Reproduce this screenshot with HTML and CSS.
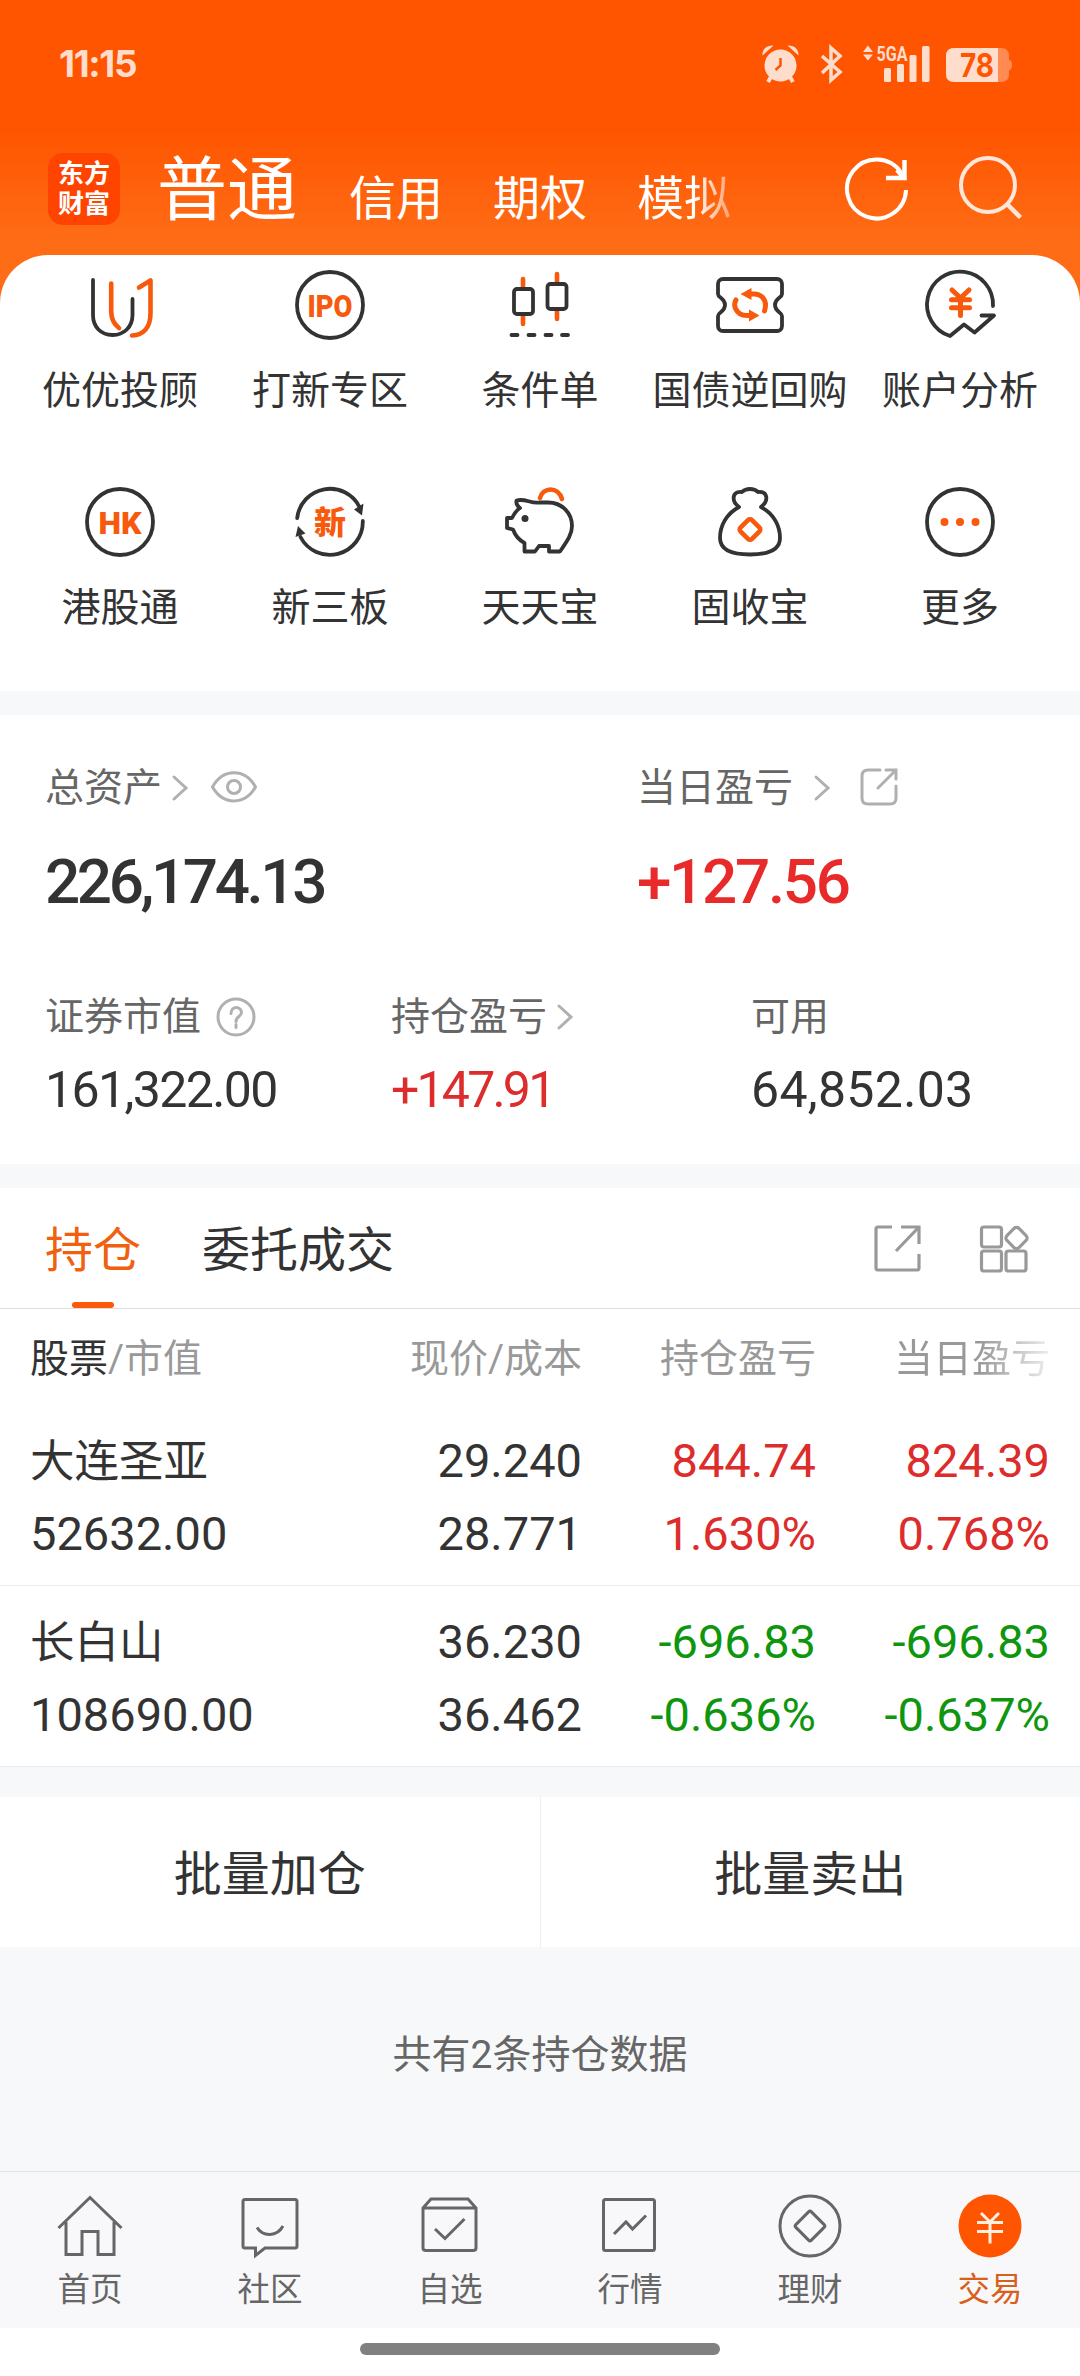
FILE: index.html
```html
<!DOCTYPE html>
<html lang="zh-CN">
<head>
    <meta charset="UTF-8">
    <meta name="viewport" content="width=device-width, initial-scale=1.0">
    <title>交易</title>
    <link rel="stylesheet" href="styles.css">
</head>
<body>
    <header class="header">
        <div class="status-bar">
            <span class="time">11:15</span>
            <svg class="status-icons" width="250" height="44" viewBox="759 42 250 44">
                <g fill="#ffddcc">
                    <circle cx="779.5" cy="65.500" r="16"/>
                    <path d="M761.500 55.500C761 49 766 45 772.500 45.500zM797.500 55.500C798 49 793 45 786.500 45.500z"/>
                    <path d="M770 77L767 82M789 77L792 82" stroke="#ffddcc" stroke-width="4"/>
                    <path d="M866.900 45.500L872 52H862zM866.900 60.500L872 54.500H862z"/>
                    <rect x="883" y="68" width="7" height="14" rx="1.500"/>
                    <rect x="896" y="64" width="7" height="18" rx="1.500"/>
                    <rect x="908.500" y="55" width="7" height="27" rx="1.500"/>
                    <rect x="921" y="46" width="7.500" height="36" rx="1.500"/>
                    <path d="M997 48H1000Q1008 48 1008 56V60Q1011 60 1011 65T1008 70V74Q1008 82 1000 82H997z" opacity=".4"/>
                    <path d="M953 48H997V82H953Q945 82 945 74V56Q945 48 953 48z"/>
                    <text class="net-label" x="875.500" y="61" textLength="31" lengthAdjust="spacingAndGlyphs">5GA</text>
                </g>
                <path d="M779.500 58V65.500L774.500 70" fill="none" stroke="#ff5500" stroke-width="2.500"/>
                <path d="M821 56L839 72L830 80V48L839 56L821 73" fill="none" stroke="#ffddcc" stroke-width="3.500"/>
                <text class="battery-label" x="959" y="76.500" textLength="34" lengthAdjust="spacingAndGlyphs">78</text>
            </svg>
        </div>
        <div class="nav">
            <div class="logo">东方<br>财富</div>
            <div class="nav-tabs">
                <span class="nav-tab active">普通</span>
                <span class="nav-tab">信用</span>
                <span class="nav-tab">期权</span>
                <span class="nav-tab fade">模拟</span>
            </div>
            <svg class="nav-icon" width="68" height="72" viewBox="842 152 68 72">
                <path d="M905 189A29.500 29.500 0 1 1 900 171.500" fill="none" stroke="#fff" stroke-width="4"/>
                <path d="M903.500 159V177H885M903 177L896 169" fill="none" stroke="#fff" stroke-width="4.500"/>
            </svg>
            <svg class="nav-icon" width="68" height="72" viewBox="955 152 68 72">
                <circle cx="987" cy="184" r="27" fill="none" stroke="#ffe6da" stroke-width="4"/>
                <path d="M1006 203L1019.500 216.500" stroke="#ffe6da" stroke-width="4.500"/>
            </svg>
        </div>
    </header>

    <div class="sheet">
        <div class="menu">
            <div class="menu-item">
                <svg class="menu-icon" viewBox="-40 -40 80 80">
                    <path class="dark" d="M-27 -25V10C-27 22 -19 30 -7.500 30S12.500 22 12.500 10V-6"/>
                    <path class="orange" d="M-8.800 -21.500V6C-8.800 15 -5 20 -1 23M19 -17.500L30.500 -24.500V8C30.500 22 24 30 12 30.500"/>
                </svg>
                <span>优优投顾</span>
            </div>
            <div class="menu-item">
                <svg class="menu-icon" viewBox="-40 -40 80 80">
                    <circle class="dark" r="33"/>
                    <text class="mark" x="-22.500" y="11.500" textLength="45" lengthAdjust="spacingAndGlyphs">IPO</text>
                </svg>
                <span>打新专区</span>
            </div>
            <div class="menu-item">
                <svg class="menu-icon" viewBox="-40 -40 80 80">
                    <path class="orange" d="M-17 -26V-17M-17 10V19M17 -31V-22M17 5V14"/>
                    <rect class="dark" x="-26" y="-16" width="19" height="25" rx="3"/>
                    <rect class="dark" x="7.500" y="-21" width="19" height="25" rx="3"/>
                    <path class="dark" d="M-28.500 30H-22.500M-11.500 30H-5.500M5.500 30H11.500M22 30H28"/>
                </svg>
                <span>条件单</span>
            </div>
            <div class="menu-item">
                <svg class="menu-icon" viewBox="-40 -40 80 80">
                    <path class="dark" d="M-27 -26H27a5 5 0 0 1 5 5V-11C32 -7 25 -7 25 0S32 7 32 11V21a5 5 0 0 1 -5 5H-27a5 5 0 0 1 -5 -5V11C-32 7 -25 7 -25 0S-32 -7 -32 -11V-21a5 5 0 0 1 5 -5z"/>
                    <path class="orange bold" d="M0 -11H4C12 -11 15.500 -5 15.500 0C15.500 3 15 4.500 14.500 6M-14 -5C-16 -2 -15.500 1 -14.500 3.500C-12.500 8 -9 10.500 -3 10.500H0"/>
                    <path class="orange-fill" d="M-9.500 -11L1.500 -17V-5zM9.500 10.500L-1 4.500V16.500z"/>
                </svg>
                <span>国债逆回购</span>
            </div>
            <div class="menu-item">
                <svg class="menu-icon" viewBox="-40 -40 80 80">
                    <path class="dark" d="M33 1A33 33 0 1 0 -10 31L4 19.500L14.500 27.500L34 10.500H21.500"/>
                    <path class="orange bold" d="M-8 -15L.5 -7L9 -15M-8.500 -5.300H9.500M-8.500 2.700H9.500M.5 -7V10.500"/>
                </svg>
                <span>账户分析</span>
            </div>
            <div class="menu-item">
                <svg class="menu-icon" viewBox="-40 -40 80 80">
                    <circle class="dark" r="33"/>
                    <text class="mark" x="-21.500" y="11.500" textLength="43" lengthAdjust="spacingAndGlyphs">HK</text>
                </svg>
                <span>港股通</span>
            </div>
            <div class="menu-item">
                <svg class="menu-icon" viewBox="-40 -40 80 80">
                    <path class="dark" d="M-32.800 -4A33 33 0 0 1 29.500 -15M32.800 -1A33 33 0 0 1 -29.500 15"/>
                    <path class="dark-fill" d="M24 -12.500L33.500 -18.500L32 -6.500zM-24.500 11.500L-34.500 15L-32 4z"/>
                    <text class="mark" x="-16" y="12" textLength="32" lengthAdjust="spacingAndGlyphs">新</text>
                </svg>
                <span>新三板</span>
            </div>
            <div class="menu-item">
                <svg class="menu-icon" viewBox="-40 -40 80 80">
                    <path class="orange" d="M0 -24C3 -35 18 -36 22 -23"/>
                    <path class="dark" d="M-20 -14C-23 -16 -24 -19 -23.500 -21.500C-14 -24 -10 -18 0 -19.500H8C22 -19.500 32 -9 32 4C32 12 28 18 20 29.500H9V24H-1L-5 29.500H-15.500V21C-21 18 -25 13 -27 7.500L-33 6V-4H-28C-26 -8 -23 -12 -20 -14z"/>
                    <circle class="dark-fill" cx="-15" cy="-3.500" r="3.500"/>
                </svg>
                <span>天天宝</span>
            </div>
            <div class="menu-item">
                <svg class="menu-icon" viewBox="-40 -40 80 80">
                    <path class="dark" d="M-11 -15C-19 -21 -18 -31 -8 -30C-4 -34 4 -34 8 -30C18 -31 19 -21 11 -15C24 -8 30 4 30 16C30 28 18 32.500 0 32.500S-30 28 -30 16C-30 4 -24 -8 -11 -15z"/>
                    <rect class="orange" x="-8" y="-8" width="16" height="16" rx="2.500" transform="translate(0 7.500) rotate(45)"/>
                </svg>
                <span>固收宝</span>
            </div>
            <div class="menu-item">
                <svg class="menu-icon" viewBox="-40 -40 80 80">
                    <circle class="dark" r="33"/>
                    <circle class="orange-fill" cx="-15.500" r="4"/>
                    <circle class="orange-fill" r="4"/>
                    <circle class="orange-fill" cx="15.500" r="4"/>
                </svg>
                <span>更多</span>
            </div>
        </div>
    </div>

    <section class="assets">
        <div class="asset-row main">
            <div class="asset">
                <div class="asset-label">总资产
                    <svg class="chevron" viewBox="0 0 18 28"><path d="M3 3L15 14L3 25"/></svg>
                    <svg class="eye" viewBox="0 0 48 34"><path d="M2.500 17C13 -2 35 -2 45.500 17C35 35.500 13 35.500 2.500 17z"/><circle cx="24" cy="17" r="6.500"/></svg>
                </div>
                <div class="asset-value">226,174.13</div>
            </div>
            <div class="asset">
                <div class="asset-label">当日盈亏
                    <svg class="chevron wide" viewBox="0 0 18 28"><path d="M3 3L15 14L3 25"/></svg>
                    <svg class="share" viewBox="0 0 40 40"><path d="M21 3H9Q3 3 3 9V31Q3 37 9 37H31Q37 37 37 31V19M27 3H37V12M36 4L19 21"/></svg>
                </div>
                <div class="asset-value red">+127.56</div>
            </div>
        </div>
        <div class="asset-row sub">
            <div class="asset">
                <div class="asset-label">证券市值
                    <svg class="help" viewBox="0 0 40 40"><circle cx="20" cy="20" r="18"/><path d="M15 16.500C15 8.500 25.500 9 25.500 15.500C25.500 19.500 20 19 20 24.500M20 27.500V30.500"/></svg>
                </div>
                <div class="asset-value">161,322.00</div>
            </div>
            <div class="asset">
                <div class="asset-label">持仓盈亏
                    <svg class="chevron" viewBox="0 0 18 28"><path d="M3 3L15 14L3 25"/></svg>
                </div>
                <div class="asset-value red">+147.91</div>
            </div>
            <div class="asset">
                <div class="asset-label">可用</div>
                <div class="asset-value usable">64,852.03</div>
            </div>
        </div>
    </section>

    <section class="positions">
        <div class="tabs">
            <div class="tab active">持仓</div>
            <div class="tab">委托成交</div>
            <svg class="tab-icon" viewBox="0 0 50 50"><path d="M20 4H6Q4 4 4 6V45Q4 47 6 47H45Q47 47 47 45V31M29 4H47V21M46 5L24 28"/></svg>
            <svg class="tab-icon" viewBox="0 0 50 50">
                <rect x="2.500" y="4" width="20" height="20" rx="2.500"/>
                <rect x="2.500" y="28" width="20" height="20" rx="2.500"/>
                <rect x="27" y="28" width="20" height="20" rx="2.500"/>
                <rect x="-8.500" y="-8.500" width="17" height="17" rx="3.500" transform="translate(37.500 15) rotate(45)"/>
            </svg>
        </div>
        <div class="table-head">
            <span><b>股票</b>/市值</span>
            <span>现价/成本</span>
            <span>持仓盈亏</span>
            <span class="fade-head">当日盈亏</span>
        </div>
        <div class="stock">
            <span class="name">大连圣亚</span><span>29.240</span><span class="red">844.74</span><span class="red">824.39</span>
            <span>52632.00</span><span>28.771</span><span class="red">1.630%</span><span class="red">0.768%</span>
        </div>
        <div class="stock">
            <span class="name">长白山</span><span>36.230</span><span class="green">-696.83</span><span class="green">-696.83</span>
            <span>108690.00</span><span>36.462</span><span class="green">-0.636%</span><span class="green">-0.637%</span>
        </div>
    </section>

    <div class="actions">
        <div class="action">批量加仓</div>
        <div class="action">批量卖出</div>
    </div>
    <p class="summary">共有2条持仓数据</p>

    <nav class="tabbar">
        <div class="tabbar-item">
            <svg viewBox="-34 -34 68 68"><path d="M-31.500 2L0 -28.500L31.500 2M-24 -4V28.500H-8V5.500H8V28.500H24V-4"/></svg>
            <span>首页</span>
        </div>
        <div class="tabbar-item">
            <svg viewBox="-34 -34 68 68"><path d="M-25 -26.500H25Q27 -26.500 27 -24.500V20Q27 22 25 22H-5L-14.500 29.500V22H-25Q-27 22 -27 20V-24.500Q-27 -26.500 -25 -26.500zM-13 1.500C-7 11 7 11 13 0"/></svg>
            <span>社区</span>
        </div>
        <div class="tabbar-item">
            <svg viewBox="-34 -34 68 68"><path d="M-27 -18L-19 -27H18L26 -18V22Q26 24.500 23 24.500H-24Q-27 24.500 -27 22zM-27 -18H26M-15 3L-5 12.500L14.500 -7"/></svg>
            <span>自选</span>
        </div>
        <div class="tabbar-item">
            <svg viewBox="-34 -34 68 68"><rect x="-26.500" y="-26.500" width="51" height="51" rx="2"/><path d="M-16 8L-4 -4L2.500 3L16 -10.500"/></svg>
            <span>行情</span>
        </div>
        <div class="tabbar-item">
            <svg viewBox="-34 -34 68 68"><circle r="30"/><rect x="-11" y="-11" width="22" height="22" rx="2" transform="rotate(45)"/></svg>
            <span>理财</span>
        </div>
        <div class="tabbar-item active">
            <svg viewBox="-34 -34 68 68"><circle r="31.500"/><path d="M-9 -13L0 -4L9 -13M-13 -3.500H13M-13 5.500H13M0 -4V17.500"/></svg>
            <span>交易</span>
        </div>
    </nav>
    <div class="home-indicator"></div>
</body>
</html>
```

FILE: styles.css
```css
* {
    box-sizing: border-box;
}
body {
    margin: 0;
    width: 1080px;
    height: 2376px;
    overflow: hidden;
    display: flex;
    flex-direction: column;
    background: #f7f8fa;
    color: #333;
    font-family: Roboto, "Noto Sans CJK SC", sans-serif;
    font-size: 39px;
    font-weight: 400;
}
svg {
    display: block;
    flex-shrink: 0;
}

/* header */
.header {
    height: 255px;
    background: linear-gradient(#ff5500 130px, #ff6c16 240px);
    color: #fff;
}
.status-bar {
    height: 128px;
    padding: 0 70px 0 59px;
    display: flex;
    align-items: center;
    justify-content: space-between;
}
.time {
    color: #ffddcc;
    font-family: Inter, sans-serif;
    font-size: 37px;
    font-weight: 700;
    letter-spacing: -1.3px;
    padding-bottom: 2px;
}
.status-icons {
    overflow: visible;
}
.net-label {
    font-family: Roboto, sans-serif;
    font-size: 21px;
    font-weight: 700;
}
.battery-label {
    font-family: Inter, sans-serif;
    font-size: 32px;
    font-weight: 700;
    fill: #ff5500;
}
.nav {
    height: 127px;
    padding: 0 56px 6px 48px;
    display: flex;
    align-items: center;
}
.logo {
    width: 72px;
    height: 72px;
    border-radius: 15px;
    background: #ff4400;
    font-size: 26px;
    font-weight: 700;
    line-height: 30px;
    padding-top: 6px;
    text-align: center;
}
.nav-tabs {
    flex: 1;
    display: flex;
    align-items: baseline;
    padding: 5px 0 0 37px;
}
.nav-tab {
    font-size: 47px;
    margin-right: 50px;
}
.nav-tab.active {
    font-size: 70px;
    line-height: 100px;
    margin-right: 52px;
}
.nav-tab.fade {
    color: transparent;
    background: linear-gradient(to right, #fff 60%, rgba(255, 255, 255, 0.4) 100%);
    -webkit-background-clip: text;
    background-clip: text;
}
.nav-icon + .nav-icon {
    margin-left: 45px;
}

/* shortcuts */
.sheet {
    background: #ff6c16;
}
.menu {
    height: 436px;
    padding: 10px 15px 0;
    background: #fff;
    border-radius: 48px 48px 0 0;
    display: grid;
    grid-template-columns: repeat(5, 210px);
    grid-auto-rows: 217px;
}
.menu-item {
    display: flex;
    flex-direction: column;
    align-items: center;
    white-space: nowrap;
}
.menu-item span {
    line-height: 60px;
    margin-top: 16px;
}
.menu-icon {
    width: 80px;
    height: 80px;
}
.dark, .orange {
    fill: none;
    stroke: #333;
    stroke-width: 3.8;
    stroke-linecap: round;
    stroke-linejoin: round;
}
.orange {
    stroke: #f75a0c;
    stroke-width: 4.6;
}
.orange.bold {
    stroke-width: 5;
}
.dark-fill {
    fill: #333;
}
.orange-fill {
    fill: #f75a0c;
}
.mark {
    fill: #f75a0c;
    font-size: 32px;
    font-weight: 900;
}

/* assets */
.assets {
    height: 449px;
    margin: 24px 0;
    padding: 44px 45px 0;
    background: #fff;
}
.asset-row {
    display: grid;
    grid-template-columns: 592px 1fr;
}
.asset-row.sub {
    grid-template-columns: 346px 360px 1fr;
    margin-top: 68px;
}
.asset-label {
    height: 58px;
    display: flex;
    align-items: center;
    color: #666;
    line-height: 60px;
}
.asset-label svg {
    fill: none;
    stroke: #b0b0b0;
    stroke-width: 3;
    stroke-linecap: round;
}
.asset-value {
    font-size: 50px;
    line-height: 60px;
    margin-top: 14px;
    letter-spacing: -1.6px;
}
.asset-value.red {
    letter-spacing: -2.8px;
}
.asset-value.usable {
    letter-spacing: 0.3px;
}
.main .asset-value {
    font-size: 62px;
    font-weight: 500;
    line-height: 76px;
    letter-spacing: -3.4px;
    margin-top: 27px;
}
.main .asset-value.red {
    letter-spacing: -2.3px;
}
.chevron {
    width: 18px;
    height: 28px;
    margin-left: 9px;
}
.chevron.wide {
    margin-left: 20px;
}
.eye {
    width: 48px;
    height: 34px;
    margin: 0 0 3px 21px;
}
.share {
    width: 40px;
    height: 40px;
    margin: 0 0 2px 28px;
}
.help {
    width: 40px;
    height: 40px;
    margin-left: 15px;
}
.red {
    color: #dc2c2c;
}
.main .red {
    color: #e82a2a;
}
.green {
    color: #0f960f;
}

/* positions */
.positions {
    background: #fff;
}
.tabs {
    height: 121px;
    padding: 0 51px 0 45px;
    display: flex;
    align-items: center;
    border-bottom: 1px solid #ddd;
    font-size: 48px;
}
.tab {
    height: 120px;
    line-height: 125px;
}
.tab.active {
    position: relative;
    color: #f0600f;
    margin-right: 61px;
}
.tab.active::after {
    content: "";
    position: absolute;
    left: 27px;
    bottom: 0;
    width: 42px;
    height: 6px;
    border-radius: 3px;
    background: #fa5a0a;
}
.tab-icon {
    width: 50px;
    height: 50px;
    fill: none;
    stroke: #999;
    stroke-width: 3.2;
    margin-left: 57px;
}
.tab + .tab-icon {
    margin-left: auto;
}
.table-head, .stock {
    display: grid;
    grid-template-columns: 302px 250px 234px 234px;
    padding: 0 30px;
    text-align: right;
}
.table-head {
    height: 96px;
    line-height: 101px;
    color: #999;
}
.table-head b {
    color: #333;
    font-weight: 400;
}
.table-head span:first-child, .stock span:nth-child(4n + 1) {
    text-align: left;
}
.fade-head {
    color: transparent;
    background: linear-gradient(to right, #999 70%, #eee 100%);
    -webkit-background-clip: text;
    background-clip: text;
}
.stock {
    height: 181px;
    padding-top: 19px;
    grid-auto-rows: 73px;
    line-height: 73px;
    font-size: 47px;
    border-bottom: 1px solid #ebebeb;
}
.stock .name {
    font-size: 44.5px;
    line-height: 76px;
}

/* actions */
.actions {
    height: 150px;
    margin-top: 30px;
    display: flex;
    background: #fff;
}
.action {
    flex: 1;
    text-align: center;
    font-size: 48px;
    line-height: 155px;
}
.action + .action {
    border-left: 1px solid #eee;
}
.summary {
    flex: 1;
    margin: 0;
    padding-top: 78px;
    line-height: 60px;
    text-align: center;
    color: #666;
}

/* bottom bar */
.tabbar {
    height: 157px;
    padding-top: 20px;
    display: grid;
    grid-template-columns: repeat(6, 180px);
    background: #f8f8fa;
    border-top: 1px solid #e3e3e3;
}
.tabbar-item {
    display: flex;
    flex-direction: column;
    align-items: center;
    color: #666;
    font-size: 32.5px;
    line-height: 48px;
}
.tabbar-item svg {
    width: 68px;
    height: 68px;
    margin-bottom: 6px;
    fill: none;
    stroke: #666;
    stroke-width: 3;
}
.tabbar-item.active {
    color: #d9601a;
}
.tabbar-item.active svg {
    stroke: #fff0e0;
}
.tabbar-item.active circle {
    fill: #ff5500;
    stroke: none;
}
.home-indicator {
    height: 48px;
    background: #fff;
    display: flex;
    justify-content: center;
    padding-top: 15px;
}
.home-indicator::after {
    content: "";
    width: 360px;
    height: 12px;
    border-radius: 6px;
    background: #808080;
}
```
